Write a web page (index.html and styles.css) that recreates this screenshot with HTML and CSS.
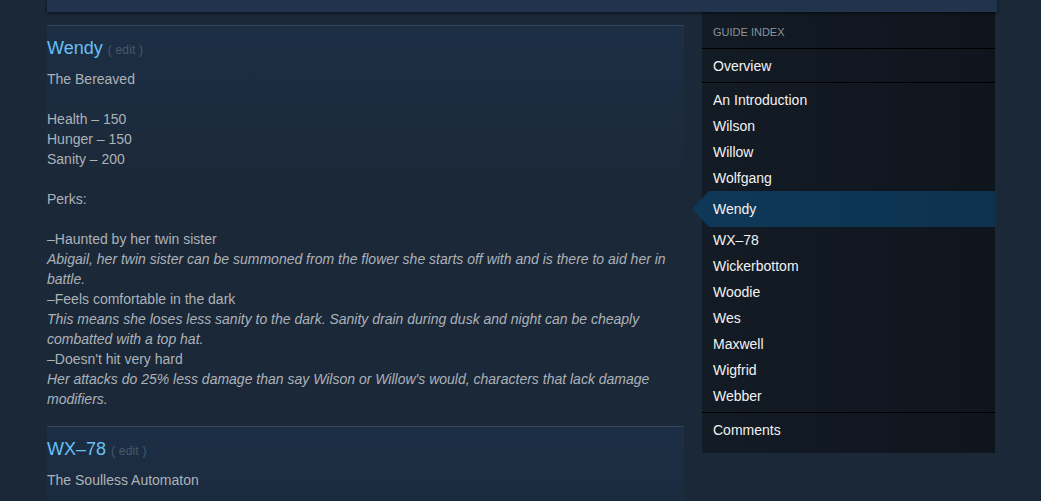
FILE: index.html
```html
<!DOCTYPE html>
<html lang="en">
<head>
<meta charset="utf-8">
<title>Guide</title>
<link rel="stylesheet" href="styles.css">
</head>
<body>
<div class="page">
  <div class="topbar"></div>
  <div class="layout">
    <main class="main">
      <section class="sub">
        <h2 class="sub-title">Wendy <span class="edit">( edit )</span></h2>
        <div class="desc">
          The Bereaved<br><br>
          Health – 150<br>
          Hunger – 150<br>
          Sanity – 200<br><br>
          Perks:<br><br>
          –Haunted by her twin sister<br>
          <i>Abigail, her twin sister can be summoned from the flower she starts off with and is there to aid her in battle.</i><br>
          –Feels comfortable in the dark<br>
          <i>This means she loses less sanity to the dark. Sanity drain during dusk and night can be cheaply combatted with a top hat.</i><br>
          –Doesn't hit very hard<br>
          <i>Her attacks do 25% less damage than say Wilson or Willow's would, characters that lack damage modifiers.</i>
        </div>
      </section>
      <section class="sub">
        <h2 class="sub-title">WX–78 <span class="edit">( edit )</span></h2>
        <div class="desc">The Soulless Automaton</div>
      </section>
    </main>
    <aside class="index">
      <div class="index-head">Guide Index</div>
      <div class="index-block"><a class="index-item">Overview</a></div>
      <div class="index-list">
        <a class="index-item">An Introduction</a>
        <a class="index-item">Wilson</a>
        <a class="index-item">Willow</a>
        <a class="index-item">Wolfgang</a>
        <a class="index-item active">Wendy</a>
        <a class="index-item">WX–78</a>
        <a class="index-item">Wickerbottom</a>
        <a class="index-item">Woodie</a>
        <a class="index-item">Wes</a>
        <a class="index-item">Maxwell</a>
        <a class="index-item">Wigfrid</a>
        <a class="index-item">Webber</a>
      </div>
      <div class="index-block last"><a class="index-item">Comments</a></div>
    </aside>
  </div>
</div>
</body>
</html>
```

FILE: styles.css
```css
html, body {
  margin: 0;
  padding: 0;
}
body {
  background: #1b2838;
  font-family: "Liberation Sans", Arial, Helvetica, sans-serif;
  font-size: 14px;
  color: #acb2b8;
  height: 501px;
  overflow: hidden;
}
.page {
  width: 950px;
  margin-left: 47px;
}
.topbar {
  height: 12px;
  background: #22334d;
  box-shadow: 0 1px 3px rgba(0, 0, 0, 0.6);
  position: relative;
  z-index: 2;
}
.layout {
  display: flex;
  gap: 18px;
  align-items: flex-start;
}
.main {
  width: 637px;
  padding-top: 13px;
}
.sub {
  border-top: 1px solid #34465c;
  padding-top: 10px;
  padding-bottom: 17px;
  background: linear-gradient(180deg, rgba(30, 54, 84, 0.45) 0px, rgba(27, 40, 56, 0) 160px);
}
.sub-title {
  margin: 0 0 7px 0;
  font-size: 18px;
  line-height: 24px;
  font-weight: normal;
  color: #66c0f4;
}
.edit {
  font-size: 12px;
  color: #4a5866;
  margin-left: 0;
  letter-spacing: 0.2px;
}
.desc {
  line-height: 20px;
  color: #acb2b8;
}
.index {
  width: 293px;
  background: linear-gradient(90deg, #131b25 0%, #0f151d 100%);
  padding-bottom: 13px;
  position: relative;
}
.index-head {
  padding: 12px 11px 8px;
  font-size: 11px;
  line-height: 16px;
  text-transform: uppercase;
  color: #8a939c;
  border-bottom: 1px solid #000;
}
.index-block {
  padding: 7px 0 6px;
  border-bottom: 1px solid #000;
}
.index-block.last {
  border-bottom: none;
  padding-bottom: 0;
}
.index-list {
  padding: 4px 0 3px;
  border-bottom: 1px solid #000;
}
.index-item {
  display: block;
  padding: 0 11px;
  line-height: 20px;
  color: #f2f2f2;
}
.index-list .index-item {
  padding-top: 3px;
  padding-bottom: 3px;
}
.index-list .index-item.active {
  position: relative;
  margin-left: 7px;
  margin-right: -1px;
  padding: 8px 4px;
  background: linear-gradient(90deg, #0f3757 0%, #0d3250 100%);
}
.index-item.active::before {
  content: "";
  position: absolute;
  left: -17px;
  top: 0;
  border-style: solid;
  border-width: 18px 17px 18px 0;
  border-color: transparent #0f3757 transparent transparent;
}
```
